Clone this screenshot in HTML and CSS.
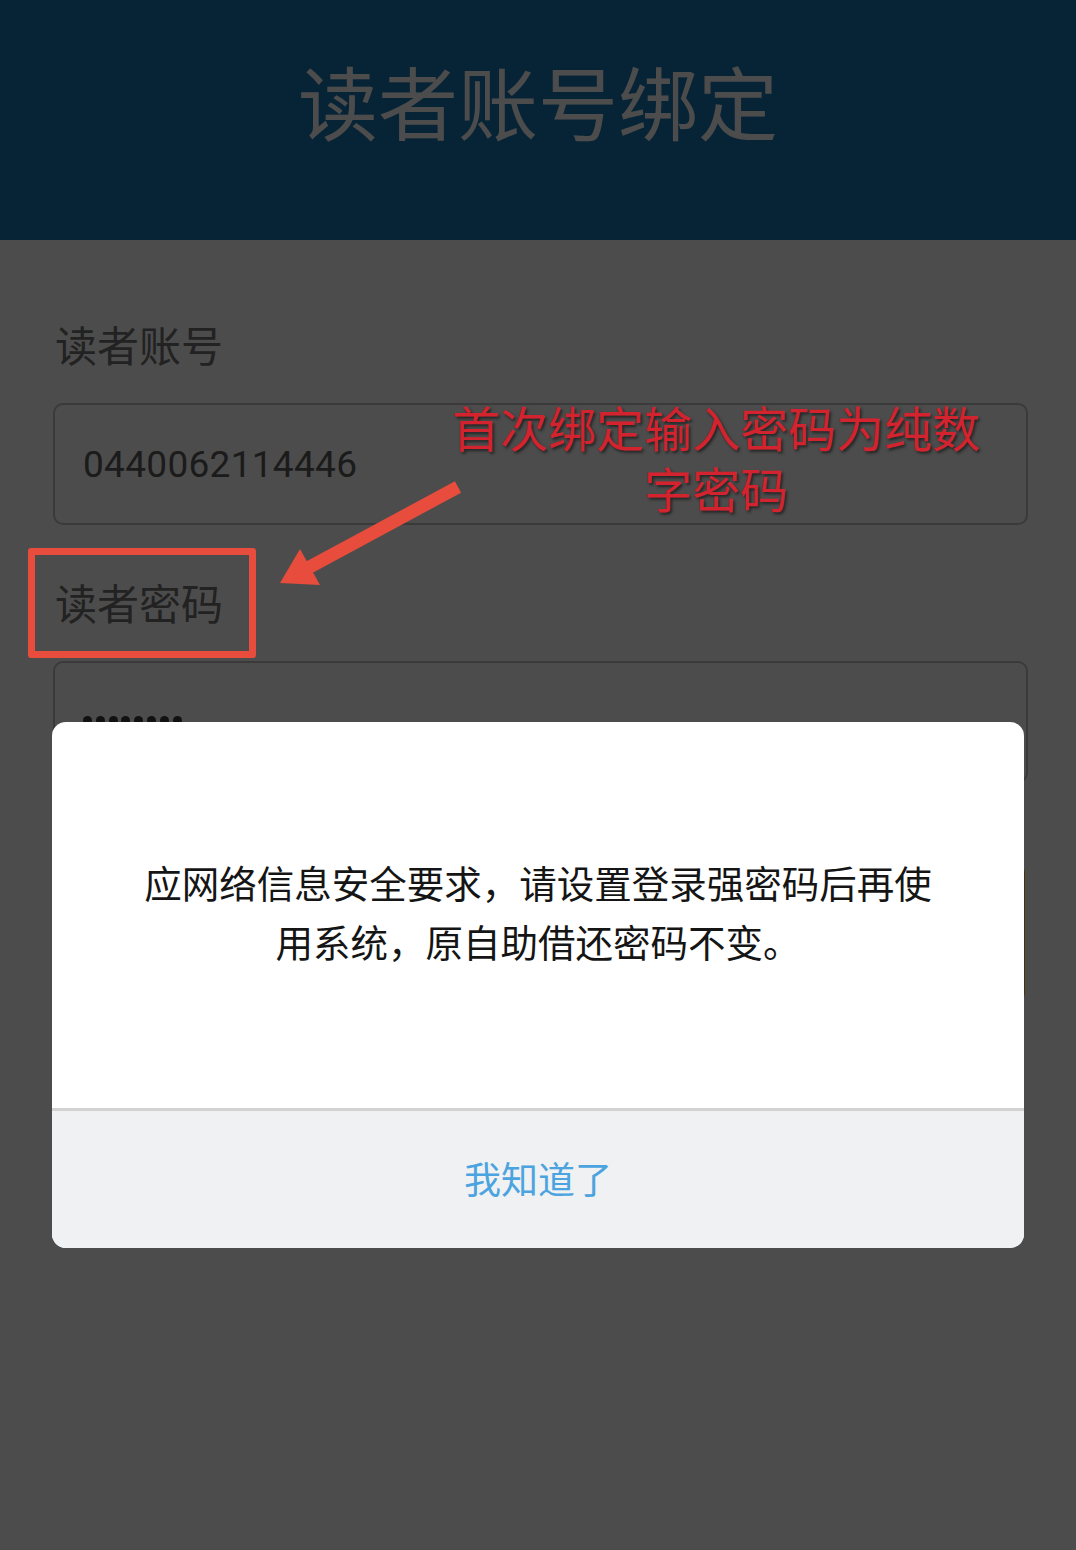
FILE: index.html
```html
<!DOCTYPE html>
<html lang="zh-CN">
<head>
<meta charset="utf-8">
<title>读者账号绑定</title>
<link rel="stylesheet" href="styles.css">
</head>
<body>
<div class="page">
  <header class="topbar">
    <h1 class="title">读者账号绑定</h1>
  </header>
  <main class="form">
    <div class="field-label">读者账号</div>
    <div class="field-input">0440062114446</div>
    <div class="field-label second">读者密码</div>
    <div class="field-input">
      <span class="dots"><i></i><i></i><i></i><i></i><i></i><i></i><i></i><i></i></span>
    </div>
    <div class="submit-btn"></div>
  </main>
</div>

<div class="overlay"></div>

<div class="dialog">
  <div class="dialog-body">
    <p class="dialog-msg">应网络信息安全要求，请设置登录强密码后再使用系统，原自助借还密码不变。</p>
  </div>
  <div class="dialog-footer">我知道了</div>
</div>

<div class="note-box"></div>
<svg class="note-arrow" width="1076" height="700" viewBox="0 0 1076 700" xmlns="http://www.w3.org/2000/svg">
  <line x1="458" y1="487" x2="306" y2="569" stroke="#e74c3c" stroke-width="13"/>
  <polygon points="280,583 300,549 320,585" fill="#e74c3c"/>
</svg>
<div class="note-text">首次绑定输入密码为纯数字密码</div>
</body>
</html>
```
FILE: styles.css
```css
* {
  box-sizing: border-box;
}

html, body {
  margin: 0;
  padding: 0;
}

body {
  width: 1076px;
  height: 1550px;
  background: #ffffff;
  font-family: "Noto Sans CJK SC", "Noto Sans", sans-serif;
  position: relative;
  overflow: hidden;
}

.page {
  height: 1550px;
  background: #ffffff;
}

.topbar {
  height: 240px;
  background: #1a76b6;
  padding-top: 49px;
}

.title {
  margin: 0;
  text-align: center;
  color: #ffffff;
  font-size: 80px;
  font-weight: 400;
  line-height: 100px;
}

.form {
  padding: 74px 48px 0 53px;
}

.field-label {
  height: 59px;
  line-height: 59px;
  font-size: 42px;
  color: #737373;
  margin: 0 0 30px 2px;
}

.field-label.second {
  margin-top: 47px;
  margin-bottom: 30px;
}

.field-input {
  height: 122px;
  border: 2px solid #c2c2c2;
  border-radius: 10px;
  padding-left: 28px;
  display: flex;
  align-items: center;
  font-family: "Roboto", "Noto Sans", sans-serif;
  font-size: 37px;
  color: #5c5c5c;
  letter-spacing: 0.3px;
}

.dots {
  display: flex;
  gap: 3.8px;
  margin-top: -4px;
}

.dots i {
  display: block;
  width: 9px;
  height: 9px;
  border-radius: 50%;
  background: #3a3a3a;
}

.submit-btn {
  margin-top: 82px;
  margin-left: -1px;
  width: 973px;
  height: 136px;
  border-radius: 8px;
  background: #f0a418;
}

.overlay {
  position: absolute;
  inset: 0;
  background: rgba(0, 0, 0, 0.7);
}

.dialog {
  position: absolute;
  left: 52px;
  top: 722px;
  width: 972px;
  height: 526px;
  border-radius: 14px;
  overflow: hidden;
  background: #ffffff;
  display: flex;
  flex-direction: column;
}

.dialog-body {
  height: 389px;
  display: flex;
  align-items: center;
  justify-content: center;
  padding: 0 86px 8px;
  border-bottom: 3px solid #d2d2d2;
}

.dialog-msg {
  margin: 0;
  text-align: center;
  font-size: 37.5px;
  line-height: 59px;
  color: #151515;
}

.dialog-footer {
  flex: 1;
  background: #f0f1f2;
  display: flex;
  align-items: center;
  justify-content: center;
  font-size: 37px;
  color: #4ba4df;
  padding-bottom: 4px;
}

.note-box {
  position: absolute;
  left: 28px;
  top: 548px;
  width: 228px;
  height: 110px;
  border: 7px solid #e74c3c;
  border-radius: 3px;
}

.note-arrow {
  position: absolute;
  left: 0;
  top: 0;
}

.note-text {
  position: absolute;
  left: 450px;
  top: 396px;
  width: 532px;
  text-align: center;
  font-size: 48px;
  line-height: 61px;
  color: #d2232f;
  text-shadow: 2px 2px 3px rgba(0, 0, 0, 0.55);
}
```
